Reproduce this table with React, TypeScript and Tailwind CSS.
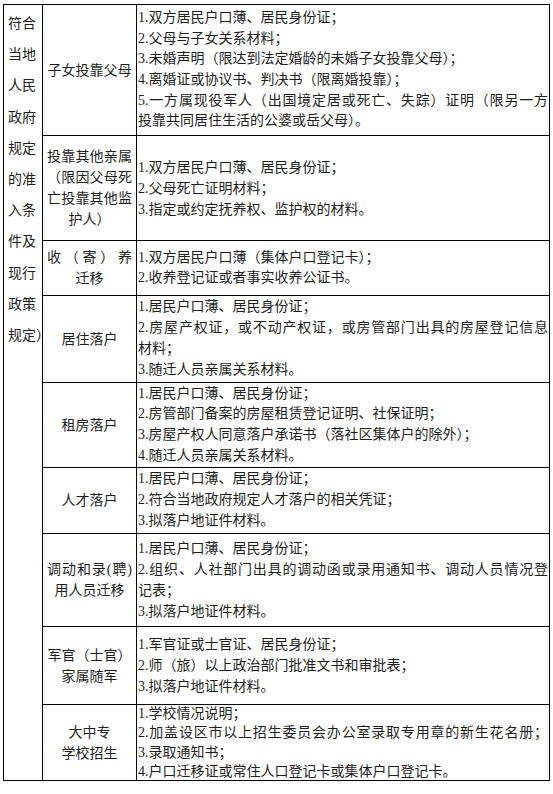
import React from "react";

type Row = {
  h: string;
  label: { t: string; j?: boolean }[];
  lines: { t: string; j?: boolean }[];
  lh: string;
};

const rows: Row[] = [
  {
    h: "h-[131px] border-b border-black",
    lh: "leading-[20.6px]",
    label: [{ t: "子女投靠父母" }],
    lines: [
      { t: "1.双方居民户口薄、居民身份证；" },
      { t: "2.父母与子女关系材料；" },
      { t: "3.未婚声明（限达到法定婚龄的未婚子女投靠父母）；" },
      { t: "4.离婚证或协议书、判决书（限离婚投靠）；" },
      { t: "5.一方属现役军人（出国境定居或死亡、失踪）证明（限另一方", j: true },
      { t: "投靠共同居住生活的公婆或岳父母）。" },
    ],
  },
  {
    h: "h-[105px] border-b border-black",
    lh: "leading-[21px]",
    label: [
      { t: "投靠其他亲属", j: true },
      { t: "（限因父母死", j: true },
      { t: "亡投靠其他监", j: true },
      { t: "护人）" },
    ],
    lines: [
      { t: "1.双方居民户口薄、居民身份证；" },
      { t: "2.父母死亡证明材料；" },
      { t: "3.指定或约定抚养权、监护权的材料。" },
    ],
  },
  {
    h: "h-[55px] border-b border-black",
    lh: "leading-[20px]",
    label: [{ t: "收（寄）养", j: true }, { t: "迁移" }],
    lines: [
      { t: "1.双方居民户口薄（集体户口登记卡）；" },
      { t: "2.收养登记证或者事实收养公证书。" },
    ],
  },
  {
    h: "h-[87px] border-b border-black",
    lh: "leading-[20.8px]",
    label: [{ t: "居住落户" }],
    lines: [
      { t: "1.居民户口薄、居民身份证；" },
      { t: "2.房屋产权证，或不动产权证，或房管部门出具的房屋登记信息", j: true },
      { t: "材料；" },
      { t: "3.随迁人员亲属关系材料。" },
    ],
  },
  {
    h: "h-[85px] border-b border-black",
    lh: "leading-[20.6px]",
    label: [{ t: "租房落户" }],
    lines: [
      { t: "1.居民户口薄、居民身份证；" },
      { t: "2.房管部门备案的房屋租赁登记证明、社保证明；" },
      { t: "3.房屋产权人同意落户承诺书（落社区集体户的除外）；" },
      { t: "4.随迁人员亲属关系材料。" },
    ],
  },
  {
    h: "h-[66px] border-b border-black",
    lh: "leading-[20.8px]",
    label: [{ t: "人才落户" }],
    lines: [
      { t: "1.居民户口薄、居民身份证；" },
      { t: "2.符合当地政府规定人才落户的相关凭证；" },
      { t: "3.拟落户地证件材料。" },
    ],
  },
  {
    h: "h-[93px] border-b border-black",
    lh: "leading-[21px]",
    label: [{ t: "调动和录(聘)", j: true }, { t: "用人员迁移" }],
    lines: [
      { t: "1.居民户口薄、居民身份证；" },
      { t: "2.组织、人社部门出具的调动函或录用通知书、调动人员情况登", j: true },
      { t: "记表；" },
      { t: "3.拟落户地证件材料。" },
    ],
  },
  {
    h: "h-[78px] border-b border-black",
    lh: "leading-[21px]",
    label: [{ t: "军官（士官）" }, { t: "家属随军" }],
    lines: [
      { t: "1.军官证或士官证、居民身份证；" },
      { t: "2.师（旅）以上政治部门批准文书和审批表；" },
      { t: "3.拟落户地证件材料。" },
    ],
  },
  {
    h: "h-[75px]",
    lh: "leading-[19.5px]",
    label: [{ t: "大中专" }, { t: "学校招生" }],
    lines: [
      { t: "1.学校情况说明；" },
      { t: "2.加盖设区市以上招生委员会办公室录取专用章的新生花名册；", j: true },
      { t: "3.录取通知书；" },
      { t: "4.户口迁移证或常住人口登记卡或集体户口登记卡。" },
    ],
  },
];

const side = ["符合", "当地", "人民", "政府", "规定", "的准", "入条", "件及", "现行", "政策", "规定）"];

export default function App() {
  return (
    <div
      className="w-[553px] h-[794px] bg-white pt-[4px] pl-[3px] text-[14px] text-[#1e1e1e]"
      style={{ fontFamily: '"Liberation Serif", "Noto Sans CJK SC", serif' }}
    >
      <div className="flex w-[547px] border border-black">
        <div className="w-[39px] shrink-0 border-r border-black pt-[3px] pl-[4px] leading-[31.2px]">
          {side.map((s, i) => (
            <div key={i} className="whitespace-nowrap">
              {s}
            </div>
          ))}
        </div>
        <div className="flex flex-1 flex-col">
          {rows.map((r, i) => (
            <div key={i} className={`flex ${r.h}`}>
              <div className="flex w-[94px] shrink-0 items-center justify-center border-r border-black">
                <div className="w-full leading-[21px]">
                  {r.label.map((l, k) => (
                    <div
                      key={k}
                      className={
                        l.j
                          ? "px-[4px] text-justify [text-align-last:justify]"
                          : "text-center whitespace-nowrap"
                      }
                    >
                      {l.t}
                    </div>
                  ))}
                </div>
              </div>
              <div className={`flex flex-1 flex-col justify-center pl-[1px] pr-[1px] ${r.lh}`}>
                {r.lines.map((l, k) => (
                  <div
                    key={k}
                    className={
                      l.j ? "text-justify [text-align-last:justify]" : "whitespace-nowrap"
                    }
                  >
                    {l.t}
                  </div>
                ))}
              </div>
            </div>
          ))}
        </div>
      </div>
    </div>
  );
}
